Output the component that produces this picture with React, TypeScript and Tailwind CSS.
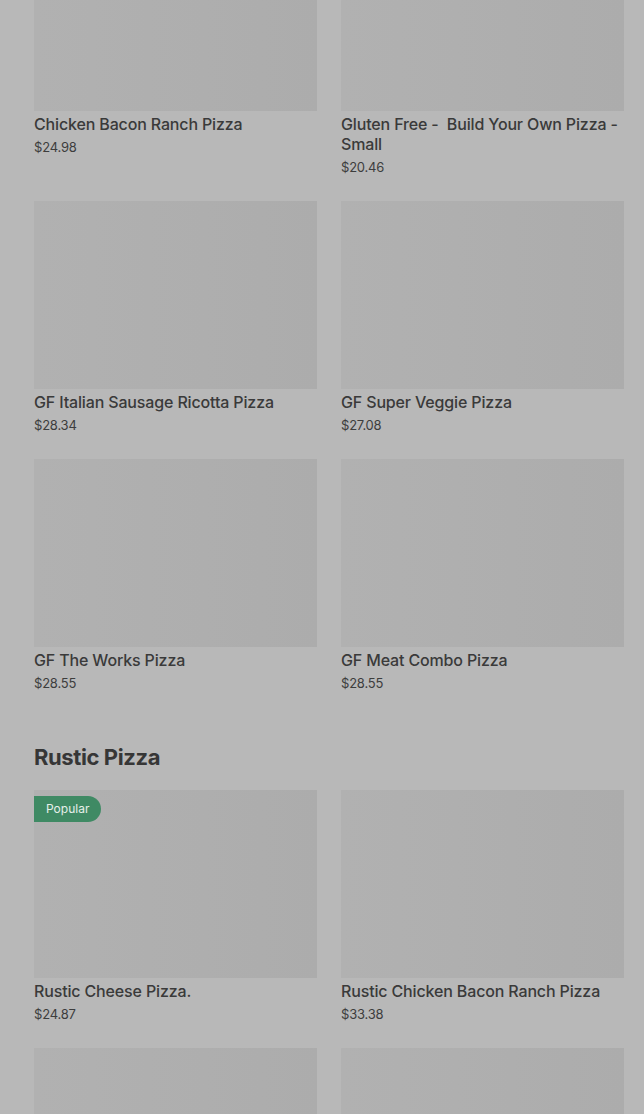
const rows = [
  [
    { name: "Chicken Bacon Ranch Pizza", price: "$24.98" },
    { name: "Gluten Free -  Build Your Own Pizza - Small", price: "$20.46" },
  ],
  [
    { name: "GF Italian Sausage Ricotta Pizza", price: "$28.34" },
    { name: "GF Super Veggie Pizza", price: "$27.08" },
  ],
  [
    { name: "GF The Works Pizza", price: "$28.55" },
    { name: "GF Meat Combo Pizza", price: "$28.55" },
  ],
];

const rustic = [
  [
    { name: "Rustic Cheese Pizza.", price: "$24.87", popular: true },
    { name: "Rustic Chicken Bacon Ranch Pizza", price: "$33.38" },
  ],
];

type Item = { name: string; price: string; popular?: boolean };

function Photo({ popular }: { popular?: boolean }) {
  return (
    <div className="relative h-[188px] bg-gradient-to-r from-[#b1b1b1] to-[#acacac]">
      {popular && (
        <span className="absolute left-0 top-[6px] h-[26px] pl-3 pr-3 flex items-center rounded-r-full bg-[#3f8a64] text-[12px] text-[#e6efe9]">
          Popular
        </span>
      )}
    </div>
  );
}

function Card({ item }: { item: Item }) {
  return (
    <div className="flex flex-col">
      <Photo popular={item.popular} />
      <div className="mt-[3px] text-[16px] leading-[20px] font-medium tracking-[-0.15px] text-[#3a3a3a] pr-1 whitespace-pre-wrap">
        {item.name}
      </div>
      <div className="mt-[4px] text-[13px] leading-[18px] text-[#3d3d3d] tracking-[-0.2px]">
        {item.price}
      </div>
    </div>
  );
}

export default function App() {
  return (
    <div className="h-[1114px] bg-[#b8b8b8] overflow-hidden" style={{ fontFamily: "Inter, 'Liberation Sans', sans-serif" }}>
      <div className="pl-[34px] pr-[20px] mt-[-77px]">
        <div className="flex flex-col gap-[25px]">
          {rows.map((row, i) => (
            <div key={i} className="grid grid-cols-2 gap-x-[24px]">
              {row.map((item) => (
                <Card key={item.name} item={item} />
              ))}
            </div>
          ))}
        </div>
        <h2 className="mt-[52px] text-[22px] leading-[26px] font-bold tracking-[-0.4px] text-[#363636]">
          Rustic Pizza
        </h2>
        <div className="mt-[20px] flex flex-col gap-[25px]">
          {rustic.map((row, i) => (
            <div key={i} className="grid grid-cols-2 gap-x-[24px]">
              {row.map((item) => (
                <Card key={item.name} item={item} />
              ))}
            </div>
          ))}
          {/* next row, photos only in view */}
          <div className="grid grid-cols-2 gap-x-[24px]">
            <Photo />
            <Photo />
          </div>
        </div>
      </div>
    </div>
  );
}
